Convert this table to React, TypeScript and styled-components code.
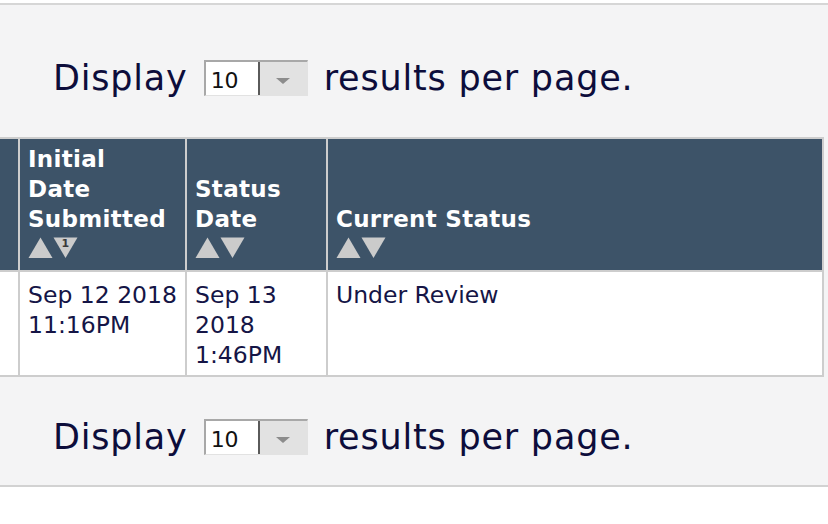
import { createGlobalStyle, styled } from 'styled-components';

const GlobalStyle = createGlobalStyle`
  * {
    box-sizing: border-box;
  }

  body {
    margin: 0;
    background: #ffffff;
    font-family: 'DejaVu Sans', Verdana, sans-serif;
  }
`;

type Row = {
  submitted: string;
  statusDate: string;
  status: string;
};

const rows: Row[] = [
  {
    submitted: 'Sep 12 2018 11:16PM',
    statusDate: 'Sep 13 2018 1:46PM',
    status: 'Under Review',
  },
];

const columns = [
  { lines: ['Initial', 'Date', 'Submitted'], sorted: true },
  { lines: ['Status', 'Date'], sorted: false },
  { lines: ['Current Status'], sorted: false },
];

const SortArrows = ({ active }: { active?: boolean }) => (
  <St.SortIcon width="50" height="21" viewBox="0 0 50 21">
    <polygon points="0.5,21 12.5,0.5 24.5,21" fill="#cbcbcb" />
    <polygon points="25.5,0.5 49.5,0.5 37.5,21" fill="#cbcbcb" />
    {active && (
      <text
        x="37.5"
        y="10"
        textAnchor="middle"
        fontSize="11"
        fontWeight="bold"
        fontFamily="DejaVu Sans, sans-serif"
        fill="#3a3a3a"
      >
        1
      </text>
    )}
  </St.SortIcon>
);

const Pager = ({ top }: { top?: boolean }) => (
  <St.Pager $top={top}>
    <St.PagerText>Display</St.PagerText>
    <St.Select>
      <St.SelectValue>10</St.SelectValue>
      <St.SelectButton>
        <St.Caret />
      </St.SelectButton>
    </St.Select>
    <St.PagerText>results per page.</St.PagerText>
  </St.Pager>
);

const App = () => {
  return (
    <>
      <GlobalStyle />
      <St.Page>
        <St.Panel>
          <Pager top />
          <St.TableWrap>
            <St.Table>
              <colgroup>
                <col style={{ width: 100 }} />
                <col style={{ width: 167 }} />
                <col style={{ width: 141 }} />
                <col style={{ width: 496 }} />
              </colgroup>
              <thead>
                <tr>
                  <St.Th></St.Th>
                  {columns.map((col) => (
                    <St.Th key={col.lines.join(' ')}>
                      {col.lines.map((line) => (
                        <St.HeadLine key={line}>{line}</St.HeadLine>
                      ))}
                      <SortArrows active={col.sorted} />
                    </St.Th>
                  ))}
                </tr>
              </thead>
              <tbody>
                {rows.map((row) => (
                  <tr key={row.submitted}>
                    <St.Td></St.Td>
                    <St.Td>{row.submitted}</St.Td>
                    <St.Td>{row.statusDate}</St.Td>
                    <St.Td>{row.status}</St.Td>
                  </tr>
                ))}
              </tbody>
            </St.Table>
          </St.TableWrap>
          <Pager />
        </St.Panel>
      </St.Page>
    </>
  );
};

export default App;

const St = {
  Page: styled.div`
    width: 828px;
    height: 524px;
    padding-top: 3px;
    background: #ffffff;
    overflow: hidden;
  `,
  Panel: styled.section`
    background: #f4f4f5;
    border-top: 2px solid #d6d6d6;
    border-bottom: 2px solid #d2d2d2;
  `,
  Pager: styled.div<{ $top?: boolean }>`
    display: flex;
    align-items: center;
    gap: 16px;

    padding: ${({ $top }) => ($top ? '55px 0 41px 53px' : '42px 0 30px 53px')};
  `,
  PagerText: styled.span`
    font-size: 35px;
    line-height: 36px;
    letter-spacing: 0.8px;
    color: #0d0d3b;
    white-space: nowrap;
  `,
  Select: styled.div`
    display: flex;

    width: 104px;
    height: 36px;

    background: #ffffff;
    border-top: 2px solid #a8a8a8;
    border-left: 2px solid #a8a8a8;
    border-right: 1px solid #e2e2e2;
    border-bottom: 1px solid #e2e2e2;
  `,
  SelectValue: styled.span`
    display: flex;
    align-items: center;

    width: 52px;
    padding: 3px 0 0 5px;

    font-size: 22px;
    color: #111111;
  `,
  SelectButton: styled.span`
    display: flex;
    justify-content: center;
    align-items: center;

    flex: 1;

    background: #e2e2e2;
    border-left: 2px solid #5a5a5a;
  `,
  Caret: styled.span`
    margin-top: 4px;
    width: 0;
    height: 0;

    border-left: 7px solid transparent;
    border-right: 7px solid transparent;
    border-top: 6px solid #8c8c8c;
  `,
  TableWrap: styled.div`
    overflow: hidden;
  `,
  Table: styled.table`
    width: 906px;
    margin-left: -82px;

    table-layout: fixed;
    border-collapse: separate;
    border-spacing: 0;
    border-right: 2px solid #cdcdcd;
  `,
  Th: styled.th`
    padding: 5px 8px 12px 8px;

    background: #3d5368;
    border-top: 2px solid #cdcdcd;
    border-left: 2px solid #cdcdcd;
    border-bottom: 2px solid #cdcdcd;

    font-size: 23px;
    font-weight: bold;
    line-height: 30px;
    letter-spacing: 0.3px;
    color: #ffffff;
    text-align: left;
    vertical-align: bottom;
  `,
  HeadLine: styled.div`
    white-space: nowrap;
  `,
  SortIcon: styled.svg`
    display: block;
    margin-top: 3px;
  `,
  Td: styled.td`
    height: 105px;
    padding: 8px 8px 5px 8px;

    background: #ffffff;
    border-left: 2px solid #cdcdcd;
    border-bottom: 2px solid #cdcdcd;

    font-size: 23.5px;
    line-height: 30px;
    color: #151546;
    vertical-align: top;
  `,
};
